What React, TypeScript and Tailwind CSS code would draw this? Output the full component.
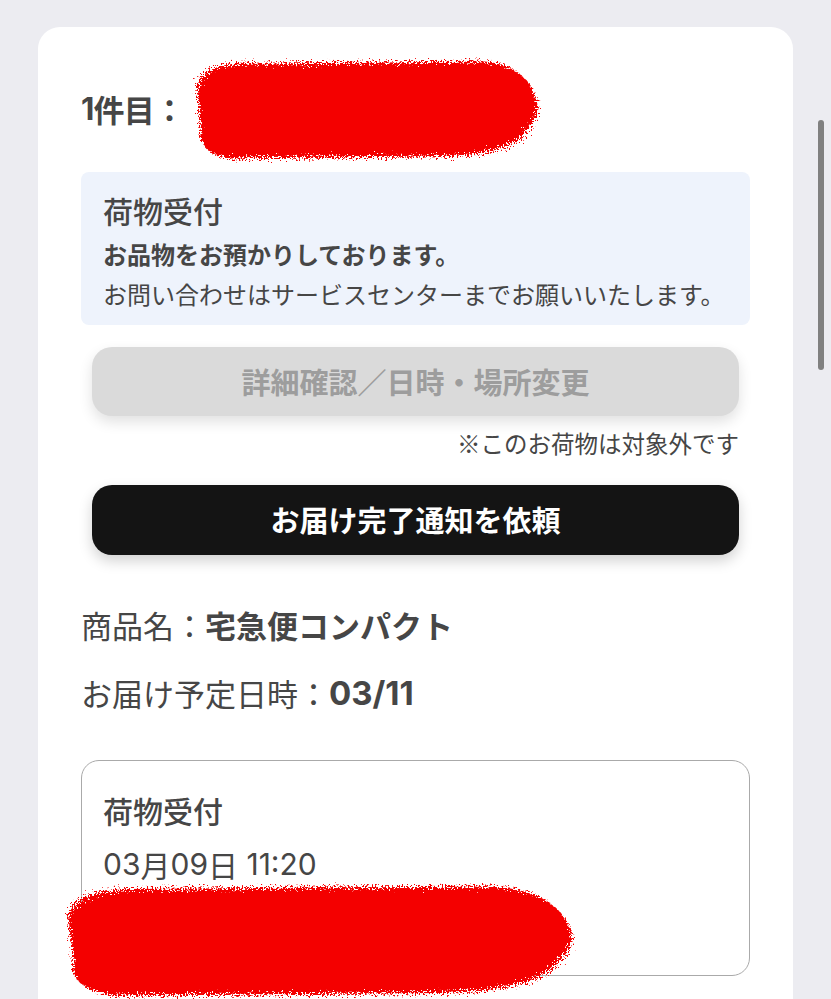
import React from 'react';

const font = { fontFamily: '"Noto Sans CJK JP", "Noto Sans", sans-serif' };
const digits = { fontFamily: 'Inter, "Noto Sans CJK JP", sans-serif' };

// rough marker-style redaction blob
const Redaction: React.FC<{ className: string; w: number; h: number; id: string }> = ({ className, w, h, id }) => (
  <svg className={className} width={w} height={h} viewBox={`0 0 ${w} ${h}`}>
    <defs>
      <filter id={id} x="-10%" y="-10%" width="120%" height="120%">
        <feTurbulence type="fractalNoise" baseFrequency="0.6" numOctaves="3" seed="7" />
        <feDisplacementMap in="SourceGraphic" scale="16" />
      </filter>
    </defs>
    <path
      filter={`url(#${id})`}
      fill="#f40000"
      d={`M ${w * 0.03} ${h * 0.3} Q ${w * 0.04} ${h * 0.1} ${w * 0.14} ${h * 0.08} L ${w * 0.82} ${h * 0.06} Q ${w * 0.92} ${h * 0.1} ${w * 0.95} ${h * 0.32} Q ${w * 0.98} ${h * 0.5} ${w * 0.94} ${h * 0.66} Q ${w * 0.9} ${h * 0.9} ${w * 0.72} ${h * 0.92} L ${w * 0.12} ${h * 0.94} Q ${w * 0.03} ${h * 0.9} ${w * 0.04} ${h * 0.66} Z`}
    />
  </svg>
);

export default function App() {
  return (
    <div className="relative h-[999px] overflow-hidden bg-[#ececf1] text-[#464646]" style={font}>
      {/* scrollbar */}
      <div className="absolute left-[818px] top-[120px] h-[250px] w-[6px] rounded-full bg-[#808080]" />

      <div className="ml-[38px] mt-[27px] w-[755px] min-h-[1000px] rounded-[22px] bg-white px-[43px]">
        {/* title */}
        <div className="relative pt-[62px]">
          <h2 className="flex h-[40px] items-center text-[31px] font-bold leading-[40px] tracking-tight">
            <span style={digits}>1</span>件目：
          </h2>
          <Redaction id="r1" className="absolute left-[105px] top-[28px]" w={365} h={110} />
        </div>

        {/* status box */}
        <div className="mt-[43px] rounded-[8px] bg-[#eef3fc] px-[22px] pt-[20px] pb-[15px]">
          <p className="text-[30px] font-medium leading-[36px]">荷物受付</p>
          <p className="mt-[10px] text-[24px] font-bold leading-[32px]">お品物をお預かりしております。</p>
          <p className="mt-[8px] text-[24px] leading-[32px]">お問い合わせはサービスセンターまでお願いいたします。</p>
        </div>

        <div className="mx-[11px]">
          <button className="mt-[22px] flex h-[69px] w-full items-center justify-center rounded-[20px] bg-[#dadada] text-[29px] font-bold text-[#9d9d9d] shadow-[0_6px_14px_rgba(0,0,0,0.12)]">
            詳細確認／日時・場所変更
          </button>
          <p className="mt-[11px] text-right text-[23.5px] leading-[32px]">※このお荷物は対象外です</p>
          <button className="mt-[26px] flex h-[70px] w-full items-center justify-center rounded-[20px] bg-[#141414] text-[29px] font-bold text-white shadow-[0_6px_14px_rgba(0,0,0,0.18)]">
            お届け完了通知を依頼
          </button>
        </div>

        <p className="mt-[50px] flex h-[40px] items-center text-[31px] leading-[40px]">
          商品名：<span className="font-bold">宅急便コンパクト</span>
        </p>
        <p className="mt-[28px] flex h-[40px] items-center text-[31px] leading-[40px]">
          お届け予定日時：<span className="text-[33px] font-bold" style={digits}>03/11</span>
        </p>

        {/* history */}
        <div className="relative mt-[47px] h-[216px] rounded-[18px] border border-[#aaaaaa] px-[21px] pt-[31px]">
          <p className="text-[30px] font-medium leading-[36px]">荷物受付</p>
          <p className="mt-[19px] flex h-[34px] items-center text-[30px] leading-[34px]" style={digits}>
            03<span style={font}>月</span>09<span style={font}>日</span>&nbsp;11:20
          </p>
          <Redaction id="r2" className="absolute left-[-30px] top-[118px]" w={540} h={124} />
        </div>
      </div>
    </div>
  );
}
